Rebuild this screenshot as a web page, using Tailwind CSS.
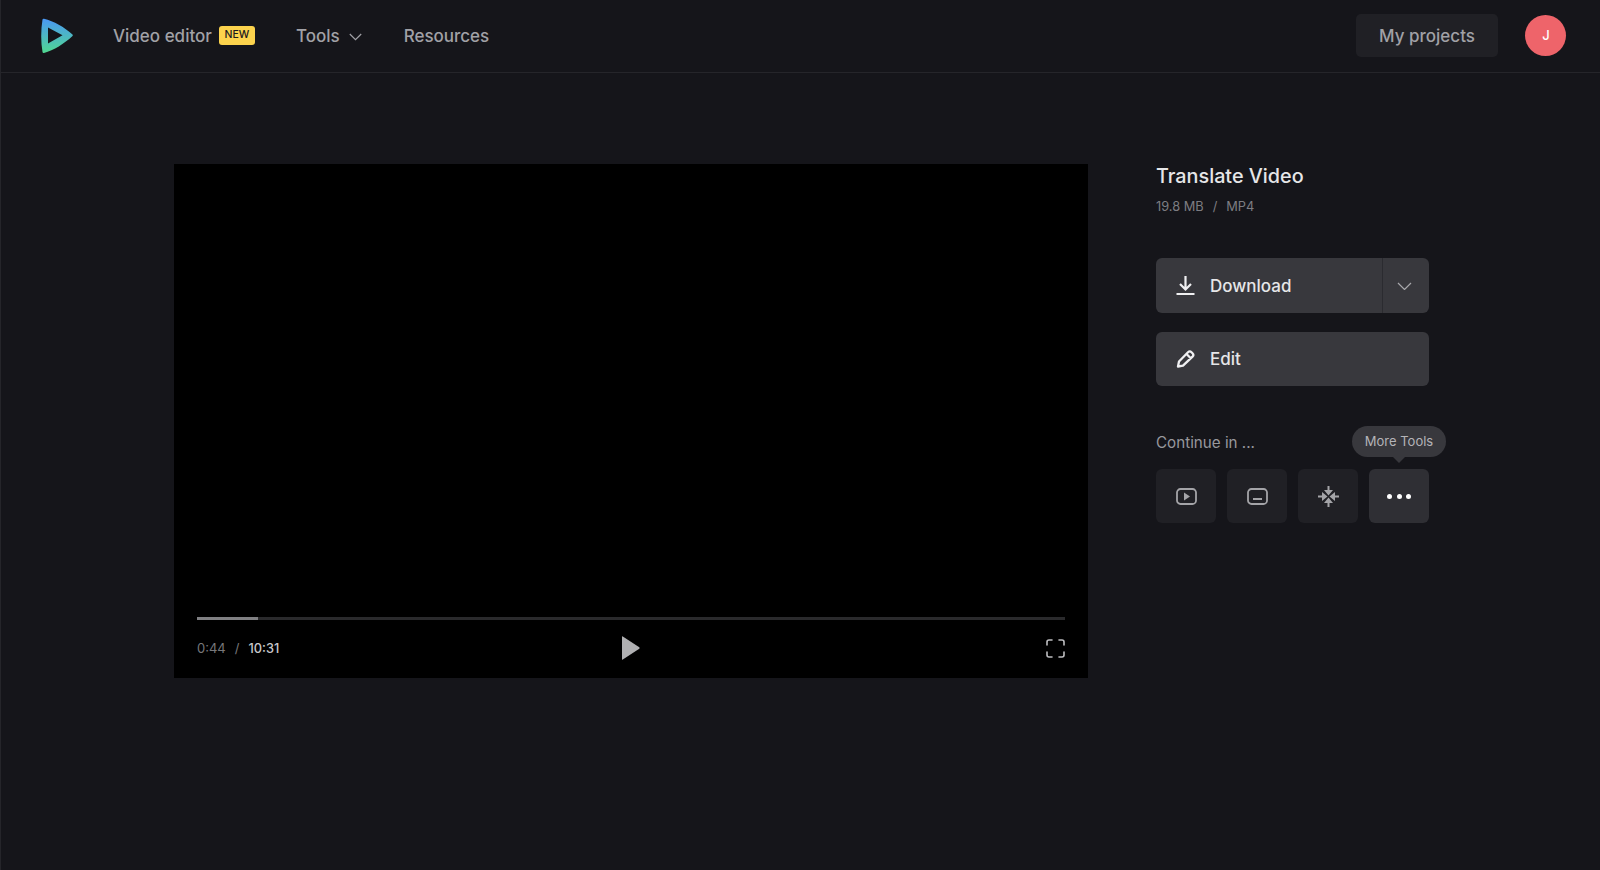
<!DOCTYPE html>
<html lang="en">
<head>
    <meta charset="UTF-8">
    <meta name="viewport" content="width=device-width, initial-scale=1.0">
    <title>Translate Video</title>
    <script src="https://cdn.jsdelivr.net/npm/@tailwindcss/browser@4"></script>
</head>
<body class="bg-[#15151a] font-['Inter',sans-serif] overflow-hidden">
    <div class="h-[870px] border-l border-[#25252a]">
        <!-- Header -->
        <header class="h-[73px] flex items-center border-b border-[#25252a] pl-[39px] pr-[34px] pb-[2px]">
            <svg class="mt-[2px] w-[34px] h-[36px] shrink-0" viewBox="0 0 34 36">
                <defs>
                    <linearGradient id="logo" x1="0" y1="0" x2="0" y2="1">
                        <stop offset="0" stop-color="#4a97f5"/>
                        <stop offset="1" stop-color="#50d890"/>
                    </linearGradient>
                </defs>
                <path fill="url(#logo)" fill-rule="evenodd" d="M2.500 1.500Q2.800 .4 4 .7C14 3 24 9 32.500 16.500Q33.300 17.300 32.500 18C24 26 14 32 4 35Q2.800 35.400 2.500 34C.8 24 .8 12 2.500 1.500ZM8 9.500V25.500L22.500 17.300Z"/>
            </svg>
            <a class="mt-[3px] ml-[39px] text-[17px] font-medium text-[#a1a1a6]">Video editor</a>
            <span class="ml-[7px] w-[36px] h-[19px] flex items-center justify-center rounded-[3px] bg-[#fcd34d] text-[10.5px] font-medium text-[#1b1b1f]">NEW</span>
            <a class="mt-[3px] ml-[41px] text-[17px] font-medium text-[#a1a1a6]">Tools</a>
            <svg class="mt-[3px] ml-[9px] w-[13px] h-[8px]" viewBox="0 0 13 8" fill="none" stroke="#a1a1a6" stroke-width="1.200"><path d="M.8 1l5.700 5.700L12.200 1"/></svg>
            <a class="mt-[3px] ml-[42px] text-[17px] font-medium text-[#a1a1a6]">Resources</a>
            <button class="ml-auto w-[142px] h-[43px] pt-[3px] rounded-[5px] bg-[#202025] text-[17px] font-medium text-[#a1a1a6]">My projects</button>
            <div class="ml-[27px] w-[41px] h-[41px] pt-[1px] pl-[1px] rounded-full bg-[#ee646a] flex items-center justify-center text-[13px] font-medium text-white">J</div>
        </header>

        <main class="flex pl-[173px] pt-[91px]">
            <!-- Video -->
            <div class="w-[914px] h-[514px] bg-black flex flex-col justify-end px-[23px] pb-[14px]">
                <div class="h-[3px] bg-[#2a2a2c]">
                    <div class="w-[7%] h-full bg-[#808083]"></div>
                </div>
                <div class="mt-[12px] h-[32px] grid grid-cols-3 items-center">
                    <div class="pt-[1px] text-[13px] flex gap-[9px]">
                        <span class="text-[#77777a]">0:44</span>
                        <span class="text-[#77777a]">/</span>
                        <span class="text-[12.800px] font-medium text-[#c8c8cb]">10:31</span>
                    </div>
                    <svg class="justify-self-center w-[19px] h-[24px]" viewBox="0 0 19 24"><path fill="#b0b0b2" d="M1 .8Q1 0 1.800 .4L18.300 11.300Q19 12 18.300 12.700L1.800 23.600Q1 24 1 23.200Z"/></svg>
                    <svg class="justify-self-end w-[19px] h-[19px]" viewBox="0 0 19 19" fill="none" stroke="#bdbdc0" stroke-width="1.600" stroke-linecap="round"><path d="M1 6V3a2 2 0 012-2h3M13 1h3a2 2 0 012 2v3M18 13v3a2 2 0 01-2 2h-3M6 18H3a2 2 0 01-2-2v-3"/></svg>
                </div>
            </div>

            <!-- Side panel -->
            <div class="ml-[68px] w-[273px]">
                <h1 class="text-[19.800px] leading-[24px] font-medium text-[#e6e6e8]">Translate Video</h1>
                <div class="mt-[9px] flex gap-[9px] text-[12.800px] leading-[20px] text-[#7d7d82]">
                    <span>19.8 MB</span><span>/</span><span>MP4</span>
                </div>

                <div class="mt-[41px] flex h-[55px] rounded-[6px] bg-[#38383d]">
                    <button class="flex-1 flex items-center pl-[20px] text-[17px] font-medium text-[#e6e6e8]">
                        <svg class="w-[19px] h-[19px]" viewBox="0 0 19 19" fill="none" stroke="#f0f0f2" stroke-width="2.200"><path d="M9.500 0v13M4 8l5.500 5.500L15 8M0.500 18h18"/></svg>
                        <span class="ml-[15px] pt-[2px]">Download</span>
                    </button>
                    <button class="w-[47px] pr-[3px] flex items-center justify-center border-l border-[#2b2b30]">
                        <svg class="w-[15px] h-[8px]" viewBox="0 0 15 8" fill="none" stroke="#a8a8ac" stroke-width="1.200"><path d="M1 1l6.500 6.500L14 1"/></svg>
                    </button>
                </div>
                <button class="mt-[19px] w-full h-[54px] flex items-center pl-[20px] rounded-[6px] bg-[#38383d] text-[17px] font-medium text-[#e6e6e8]">
                    <svg class="w-[19px] h-[18px]" viewBox="0 0 19 18" fill="none" stroke="#f0f0f2" stroke-width="2.300" stroke-linejoin="round"><path d="M2 16.500l1-5L12 2.200a2.500 2.500 0 013.500 0l1 1a2.500 2.500 0 010 3.500L7 15.700Z M10.500 4l4.500 4.500"/></svg>
                    <span class="ml-[15px] pt-[2px]">Edit</span>
                </button>

                <div class="relative mt-[44px]">
                    <div class="pt-[1px] h-[24px] text-[15.200px] leading-[24px] text-[#98989d]">Continue in ...</div>
                    <div class="absolute left-[196px] top-[-4px] w-[94px] h-[31px] rounded-full bg-[#38383d] flex items-center justify-center text-[13px] text-[#b4b4b8]">
                        More Tools
                        <span class="absolute left-[41px] bottom-[-6px] w-0 h-0 border-x-[6px] border-x-transparent border-t-[6px] border-t-[#38383d]"></span>
                    </div>
                </div>
                <div class="mt-[15px] grid grid-cols-4 gap-[11px]">
                    <button class="h-[54px] rounded-[6px] bg-[#202025] flex items-center justify-center">
                        <svg class="w-[21px] h-[17px]" viewBox="0 0 21 17" fill="none" stroke="#a4a4a8" stroke-width="1.800"><rect x="1" y="1" width="19" height="15" rx="3.500"/><path fill="#a4a4a8" stroke="none" d="M8 4.500v8l6-4Z"/></svg>
                    </button>
                    <button class="h-[54px] rounded-[6px] bg-[#202025] flex items-center justify-center">
                        <svg class="w-[21px] h-[17px]" viewBox="0 0 21 17" fill="none" stroke="#a4a4a8" stroke-width="1.800"><rect x="1" y="1" width="19" height="15" rx="3.500"/><path stroke-width="2" d="M6 11h9"/></svg>
                    </button>
                    <button class="h-[54px] rounded-[6px] bg-[#202025] flex items-center justify-center">
                        <svg class="w-[21px] h-[21px]" viewBox="0 0 21 21" fill="#a4a4a8" stroke="#a4a4a8" stroke-width="2"><path d="M10.500 0v5M10.500 21v-5M0 10.500h5M21 10.500h-5"/><path stroke="none" d="M6 4h9l-4.500 5.500ZM6 17h9l-4.500-5.500ZM4 6v9l5.500-4.500ZM17 6v9l-5.500-4.500Z"/></svg>
                    </button>
                    <button class="h-[54px] rounded-[6px] bg-[#2f2f34] flex items-center justify-center gap-[4.500px]">
                        <span class="w-[5px] h-[5px] rounded-full bg-white"></span>
                        <span class="w-[5px] h-[5px] rounded-full bg-white"></span>
                        <span class="w-[5px] h-[5px] rounded-full bg-white"></span>
                    </button>
                </div>
            </div>
        </main>
    </div>
</body>
</html>
